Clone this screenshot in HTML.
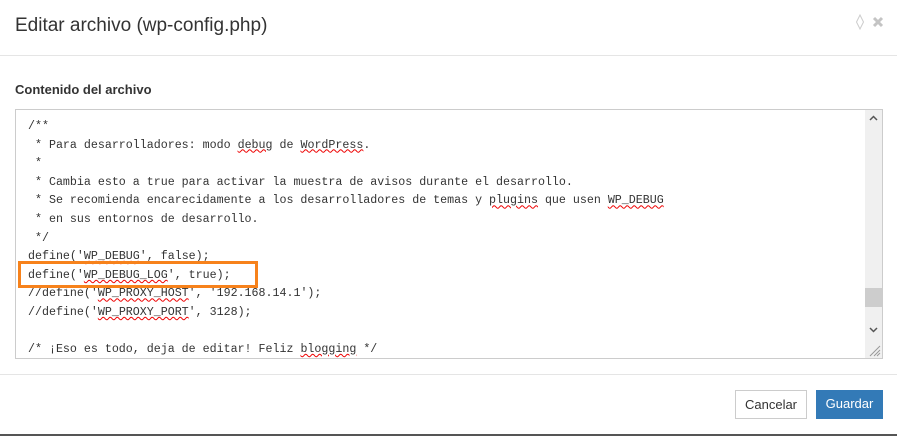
<!DOCTYPE html>
<html><head><style>
body{margin:0;width:897px;height:436px;background:#fff;font-family:"Liberation Sans",sans-serif;position:relative;overflow:hidden}
.t{position:absolute;left:15px;top:15px;font-size:19px;color:#333}
.hl{position:absolute;left:0;right:0;top:55px;height:1px;background:#e5e5e5}
.lbl{position:absolute;left:15px;top:82px;font-size:13px;font-weight:bold;color:#333}
.ta{position:absolute;left:15px;top:109px;width:866px;height:248px;border:1px solid #ccc;overflow:hidden}
pre{margin:0;position:absolute;left:12px;top:8px;font-family:"Liberation Mono",monospace;font-size:11.65px;line-height:18.6px;color:#333}
.sb{position:absolute;right:0;top:0;width:17px;height:248px;background:#f0f0f0}
.th{position:absolute;left:0;top:178px;width:17px;height:19px;background:#cdcdcd}
.box{position:absolute;left:18px;top:261px;width:234px;height:21px;border:3px solid #f7821b}
.fl{position:absolute;left:0;right:0;top:374px;height:1px;background:#e5e5e5}
.b{position:absolute;top:390px;height:28px;font-size:13px;line-height:28px;text-align:center}
.bl{position:absolute;left:0;right:0;top:434px;height:2px;background:#555}
u{text-decoration:underline wavy #e00;text-decoration-thickness:1px}
</style></head><body>
<div class="t">Editar archivo (wp-config.php)</div>
<svg style="position:absolute;left:855px;top:14px" width="30" height="16"><path d="M5 1L8.5 8L5 15L1.5 8Z" fill="none" stroke="#ccc" stroke-width="1"/><path d="M19 4L27 12M27 4L19 12" stroke="#c4c4c4" stroke-width="3"/></svg>
<div class="hl"></div>
<div class="lbl">Contenido del archivo</div>
<div class="ta"><pre>/**
 * Para desarrolladores: modo <u>debug</u> de <u>WordPress</u>.
 *
 * Cambia esto a true para activar la muestra de avisos durante el desarrollo.
 * Se recomienda encarecidamente a los desarrolladores de temas y <u>plugins</u> que usen <u>WP_DEBUG</u>
 * en sus entornos de desarrollo.
 */
define('<u>WP_DEBUG</u>', false);
define('<u>WP_DEBUG_LOG</u>', true);
//define('<u>WP_PROXY_HOST</u>', '192.168.14.1');
//define('<u>WP_PROXY_PORT</u>', 3128);

/* ¡Eso es todo, deja de editar! Feliz <u>blogging</u> */</pre>
<div class="sb"><div class="th"></div>
<svg style="position:absolute;left:0;top:0" width="17" height="248"><path d="M5 10L8.5 6.5L12 10" fill="none" stroke="#555" stroke-width="1.5"/><path d="M5 218L8.5 221.5L12 218" fill="none" stroke="#555" stroke-width="1.5"/></svg></div>
<svg style="position:absolute;right:1px;bottom:1px" width="14" height="14"><path d="M13 3L3 13M13 7L7 13M13 10L10 13" stroke="#999" stroke-width="1"/></svg>
</div>
<div class="box"></div>
<div class="fl"></div>
<div class="b" style="left:735px;width:70px;border:1px solid #ccc;color:#333;height:27px">Cancelar</div>
<div class="b" style="left:816px;width:67px;background:#337ab7;color:#fff;height:29px">Guardar</div>
<div class="bl"></div>
</body></html>
